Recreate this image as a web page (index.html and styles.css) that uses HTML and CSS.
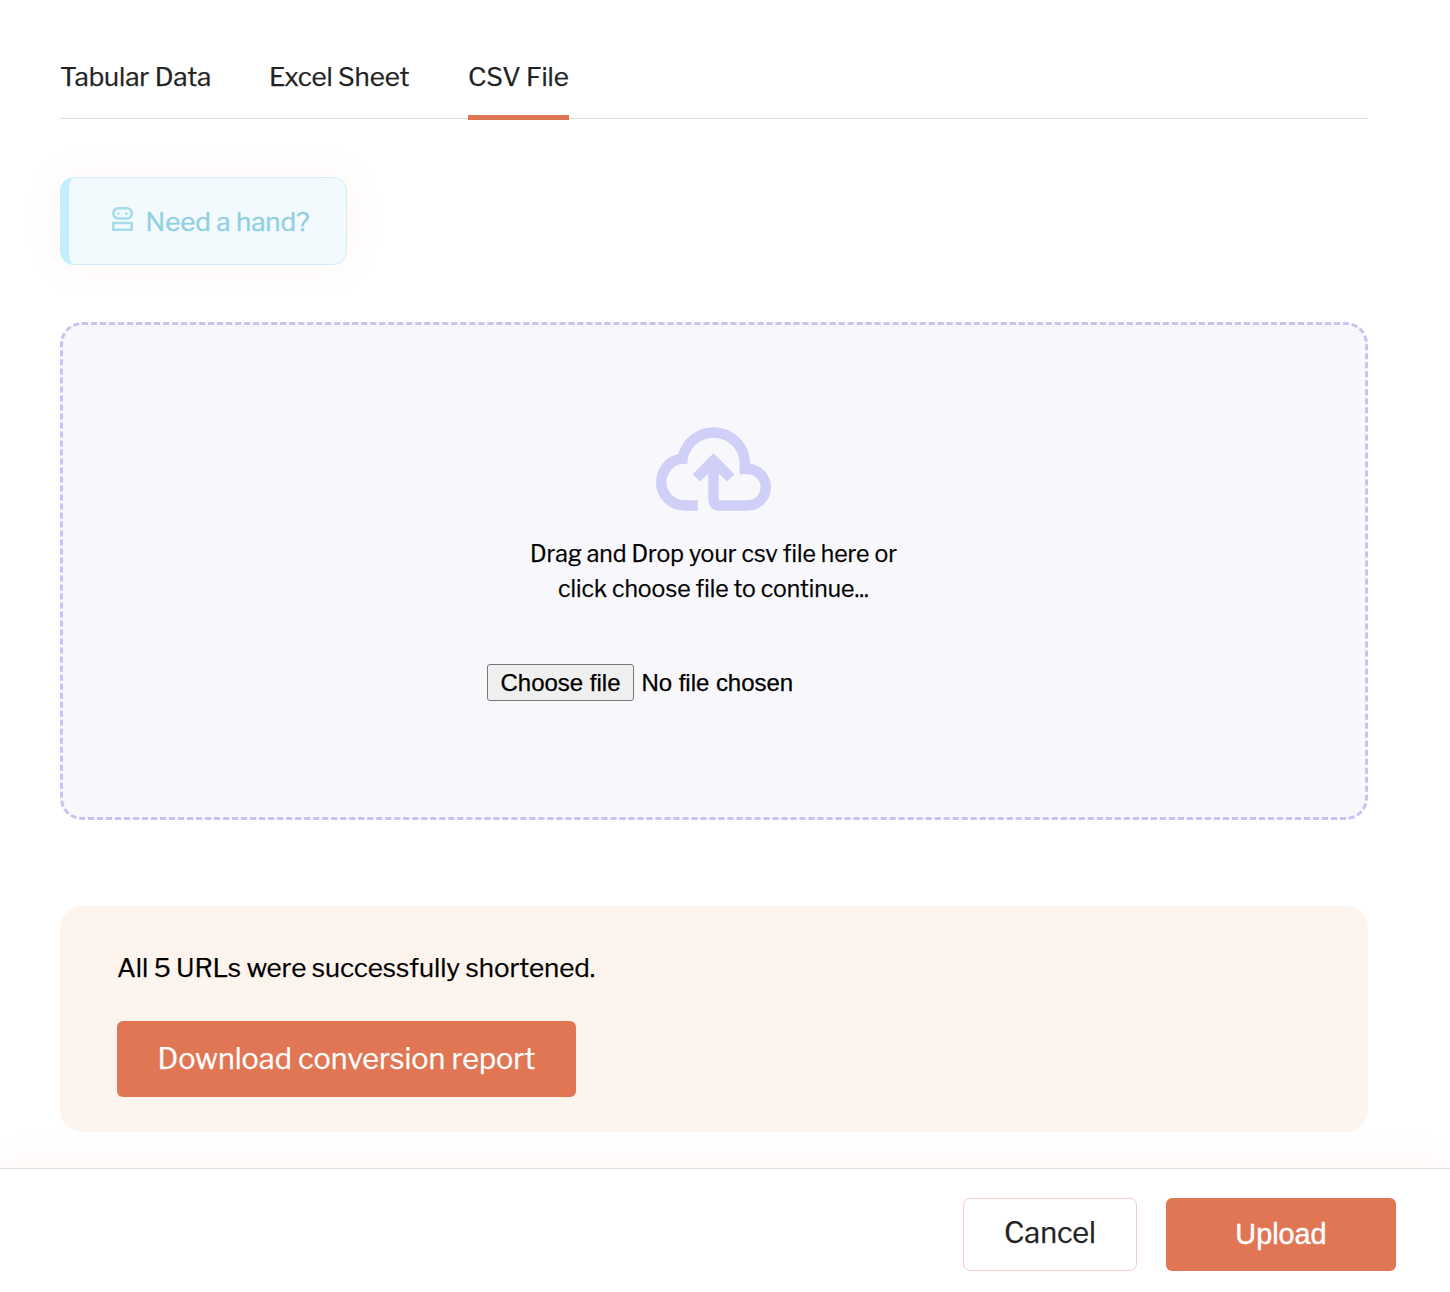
FILE: index.html
```html
<!DOCTYPE html>
<html lang="en">
<head>
<meta charset="utf-8">
<title>Bulk upload</title>
<link rel="stylesheet" href="styles.css">
</head>
<body>
<main class="content">
  <nav class="tabs">
    <a class="tab tab-tabular"><span>Tabular Data</span></a>
    <a class="tab tab-excel"><span>Excel Sheet</span></a>
    <a class="tab tab-csv active"><span>CSV File</span></a>
  </nav>
  <button class="help">
    <svg class="robot" viewBox="0 0 21 24" fill="none" stroke="currentColor" stroke-width="2.6">
      <rect x="1.3" y="1.3" width="18.4" height="10.2" rx="5"/>
      <path d="M1.3 16h18.4v6.700H1.300z"/>
      <circle cx="6.4" cy="6.6" r="1.3" fill="currentColor" stroke="none"/>
      <circle cx="14.4" cy="6.6" r="1.3" fill="currentColor" stroke="none"/>
    </svg>
    <span class="help-text">Need a hand?</span>
  </button>
  <section class="dropzone">
    <svg class="cloud" viewBox="40 -800 880 640" fill="currentColor"><path d="M260-160q-91 0-155.500-63T40-377q0-78 47-139t123-78q25-92 100-149t170-57q117 0 198.500 81.500T760-520q69 8 114.500 59.500T920-340q0 75-52.500 127.500T740-160H520q-33 0-56.500-23.500T440-240v-206l-64 62-56-56 160-160 160 160-56 56-64-62v206h220q42 0 71-29t29-71q0-42-29-71t-71-29h-60v-80q0-83-58.500-141.500T480-720q-83 0-141.500 58.500T280-520h-20q-58 0-99 41t-41 99q0 58 41 99t99 41h100v80H260Z"/></svg>
    <p class="hint"><span class="hint-one">Drag and Drop your csv file here or</span><br><span class="hint-two">click choose file to continue...</span></p>
    <div class="picker">
      <button class="choose">Choose file</button>
      <span class="filename">No file chosen</span>
    </div>
  </section>
  <section class="report">
    <p class="message"><span>All 5 URLs were successfully shortened.</span></p>
    <button class="primary download"><span>Download conversion report</span></button>
  </section>
</main>
<footer class="footer">
  <button class="cancel"><span>Cancel</span></button>
  <button class="primary upload"><span>Upload</span></button>
</footer>
</body>
</html>
```
FILE: styles.css
```css
* { box-sizing: border-box; }
body {
  margin: 0;
  height: 1292px;
  display: flex;
  flex-direction: column;
  background: #fff;
  color: #000;
  font-family: "Libre Franklin", Inter, "Liberation Sans", sans-serif;
  -webkit-text-stroke: 0.25px currentColor;
  overflow: hidden;
}
button { font-family: inherit; margin: 0; padding: 0; }
p { margin: 0; }
.content {
  height: 1168px;
  padding: 35px 82px 0 60px;
  display: flex;
  flex-direction: column;
  align-items: flex-start;
}
.tabs {
  width: 100%;
  height: 84px;
  display: flex;
  gap: 58px;
  border-bottom: 1px solid #dedede;
}
.tab {
  height: 85px;
  line-height: 84px;
  font-size: 26px;
  letter-spacing: -0.1px;
  color: #222;
  white-space: nowrap;
}
.tab-tabular { width: 151px; }
.tab-excel { width: 141px; }
.tab-csv { width: 101px; }
.tab.active { border-bottom: 5px solid #e07553; }
.help {
  width: 287px;
  height: 88px;
  margin-top: 58px;
  padding-left: 43px;
  display: flex;
  align-items: center;
  gap: 12.500px;
  border: 1px solid #d3eef6;
  border-left: 9px solid #c2effb;
  border-radius: 14px;
  background: #f2fafd;
  color: #90d0e1;
  font-size: 26px;
  white-space: nowrap;
  box-shadow: 0 0 40px rgba(240, 110, 80, 0.07);
}
.robot { width: 21px; height: 24px; margin-top: -4px; color: #a4dcea; }
.help-text { letter-spacing: -0.05px; -webkit-text-stroke: 0.4px currentColor; }
.dropzone {
  width: 100%;
  height: 498px;
  margin-top: 57px;
  padding: 102px 1px 0 0;
  display: flex;
  flex-direction: column;
  align-items: center;
  border: 3px dashed #c9c3f0;
  border-radius: 22px;
  background: #f8f7fc;
}
.cloud { width: 115px; height: 84px; color: #cfcff7; }
.hint {
  margin-top: 26px;
  font-size: 23px;
  line-height: 35px;
  text-align: center;
}
.picker {
  width: 453px;
  margin-top: 57px;
  display: flex;
  align-items: center;
  gap: 7.500px;
  font-family: "Liberation Sans", Arial, sans-serif;
  font-size: 24px;
  white-space: nowrap;
}
.filename { letter-spacing: -0.04px; }
.choose {
  width: 147px;
  height: 37px;
  border: 1px solid #76767a;
  border-radius: 3px;
  background: #efefef;
  color: #000;
  font-size: 24px;
}
.report {
  width: 100%;
  height: 226px;
  margin-top: 86px;
  padding: 42px 57px 0;
  border-radius: 22px;
  background: #fdf4ed;
}
.message { font-size: 26px; line-height: 40px; letter-spacing: -0.06px; white-space: nowrap; }
.primary {
  border: 0;
  border-radius: 6px;
  background: #e17654;
  color: #fff;
  font-size: 28.800px;
  white-space: nowrap;
}
.download { width: 459px; height: 76px; margin-top: 33px; padding-bottom: 2px; display: block; }
.footer {
  height: 124px;
  padding: 29px 54px 0 0;
  display: flex;
  justify-content: flex-end;
  gap: 29px;
  border-top: 1px solid #dfdfe2;
  background: #fff;
  box-shadow: 0 0 40px rgba(240, 110, 80, 0.08);
}
.cancel {
  width: 174px;
  height: 73px;
  padding-bottom: 4px;
  border: 1px solid #f0cdc8;
  border-radius: 7px;
  background: #fff;
  color: #222;
  font-size: 28.800px;
}
.upload {
  width: 230px;
  height: 73px;
  font-family: "Liberation Sans", Arial, sans-serif;
  -webkit-text-stroke: 0.4px #fff;
}
```
